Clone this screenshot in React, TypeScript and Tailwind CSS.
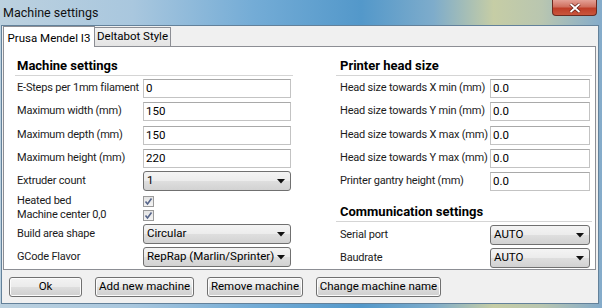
import React from "react";

const font = { fontFamily: 'Roboto, "Liberation Sans", sans-serif' };

function Arrow() {
  return (
    <svg width="8" height="5" viewBox="0 0 8 5" className="shrink-0">
      <path d="M0 0 L8 0 L4 4.5 Z" fill="#111" />
    </svg>
  );
}

function Input({ value }: { value: string }) {
  return (
    <div className="h-[19px] flex-1 border border-[#c3c3c3] border-t-[#a9a9a9] bg-white pl-[2px] flex items-center text-[11.5px] text-black whitespace-nowrap">
      {value}
    </div>
  );
}

function Select({ value, h = 20 }: { value: string; h?: number }) {
  return (
    <div
      className="flex-1 rounded-[3px] border border-[#707070] bg-[linear-gradient(180deg,#f4f4f4_0%,#ececec_48%,#dedede_52%,#d2d2d2_100%)] flex items-center justify-between pl-[3px] pr-[5px] text-[11.5px] text-black whitespace-nowrap"
      style={{ height: h }}
    >
      <span>{value}</span>
      <Arrow />
    </div>
  );
}

function Check() {
  return (
    <div className="w-[11px] h-[11px] border border-[#9a9a9a] bg-[linear-gradient(180deg,#e4e4e4,#f4f4f4)] flex items-center justify-center">
      <svg width="9" height="9" viewBox="0 0 9 9">
        <path d="M1.5 4.5 L3.5 7 L7.5 1.5" stroke="#56658a" strokeWidth="1.6" fill="none" />
      </svg>
    </div>
  );
}

function Row({
  label,
  children,
  labelW,
  className = "",
  h = 19,
}: {
  label: string;
  children: React.ReactNode;
  labelW: number;
  className?: string;
  h?: number;
}) {
  return (
    <div className={"flex items-center " + className} style={{ height: h }}>
      <div className="shrink-0 text-[11px] tracking-[-0.2px] text-[#1b1b1b] whitespace-nowrap" style={{ width: labelW }}>
        {label}
      </div>
      {children}
    </div>
  );
}

function Heading({ text, className = "" }: { text: string; className?: string }) {
  return (
    <div className={"h-[19px] border-b border-[#d5d5d5] flex items-center text-[13px] font-bold text-black whitespace-nowrap " + className}>
      <span className="pl-[2px]">{text}</span>
    </div>
  );
}

function Button({ text, w }: { text: string; w: number }) {
  return (
    <div
      className="h-[20px] rounded-[3px] border border-[#707070] bg-[linear-gradient(180deg,#f3f3f3_0%,#ebebeb_48%,#dddddd_52%,#cfcfcf_100%)] flex items-center justify-center text-[11.5px] text-black whitespace-nowrap shadow-[inset_0_0_0_1px_#fcfcfc]"
      style={{ width: w }}
    >
      {text}
    </div>
  );
}

export default function App() {
  return (
    <div
      className="w-[602px] h-[308px] flex flex-col bg-[linear-gradient(90deg,#bcd1df_0%,#a9c7de_22%,#74acd6_42%,#5398ca_60%,#7eaccb_72%,#c6cda5_82%,#b9c6b0_90%,#84abca_100%)] overflow-hidden"
      style={font}
    >
      {/* title bar */}
      <div className="h-[25px] flex items-start justify-between shrink-0">
        <div className="pl-[3px] pt-[4px] text-[12.5px] text-[#111] whitespace-nowrap">Machine settings</div>
        <div className="mr-[5px] w-[45px] h-[16px] rounded-b-[4px] border border-t-0 border-[#6b2a20] bg-[linear-gradient(180deg,#e4a196_0%,#d0705f_45%,#bf3e28_55%,#c9563d_100%)] flex items-center justify-center">
          <svg width="12" height="10" viewBox="0 0 12 10">
            <path d="M1.5 1 L10.5 9 M10.5 1 L1.5 9" stroke="#5a1a12" strokeWidth="3.2" />
            <path d="M1.5 1 L10.5 9 M10.5 1 L1.5 9" stroke="#fff" strokeWidth="1.8" />
          </svg>
        </div>
      </div>

      {/* content */}
      <div className="ml-[1px] w-[598px] h-[279px] border border-[#63819a] bg-[#f0f0f0] flex flex-col">
        {/* tabs */}
        <div className="h-[21px] flex items-end pl-[1px] relative z-10">
          <div className="h-[21px] w-[92px] border border-b-0 border-[#8c8e94] bg-white flex items-start justify-center pt-[3px] text-[11.5px] text-black whitespace-nowrap">
            Prusa Mendel I3
          </div>
          <div className="h-[19px] w-[76px] border border-b-0 border-l-0 border-[#8c8e94] bg-[linear-gradient(180deg,#f2f2f2,#e4e4e4)] flex items-center justify-center text-[11.5px] text-black mb-[1px] whitespace-nowrap">
            Deltabot Style
          </div>
        </div>
        {/* panel */}
        <div className="ml-[1px] -mt-[1px] w-[593px] h-[224px] border border-[#8c8e94] bg-white flex pl-[11px] pt-[10px]">
          {/* left */}
          <div className="w-[278px] flex flex-col">
            <Heading text="Machine settings" />
            <div className="flex flex-col pl-[2px] pr-[2px]">
              <Row label="E-Steps per 1mm filament" labelW={126} className="mt-[3px]">
                <Input value="0" />
              </Row>
              <Row label="Maximum width (mm)" labelW={126} className="mt-[4px]">
                <Input value="150" />
              </Row>
              <Row label="Maximum depth (mm)" labelW={126} className="mt-[5px]">
                <Input value="150" />
              </Row>
              <Row label="Maximum height (mm)" labelW={126} className="mt-[4px]">
                <Input value="220" />
              </Row>
              <Row label="Extruder count" labelW={126} className="mt-[3px]" h={20}>
                <Select value="1" />
              </Row>
              <Row label="Heated bed" labelW={126} className="mt-[3px]" h={14}>
                <Check />
              </Row>
              <Row label="Machine center 0,0" labelW={126} h={14}>
                <Check />
              </Row>
              <Row label="Build area shape" labelW={126} className="mt-[2px]" h={20}>
                <Select value="Circular" />
              </Row>
              <Row label="GCode Flavor" labelW={126} className="mt-[3px]" h={20}>
                <Select value="RepRap (Marlin/Sprinter)" />
              </Row>
            </div>
          </div>
          {/* right */}
          <div className="ml-[43px] w-[256px] flex flex-col">
            <Heading text="Printer head size" className="pl-[2px]" />
            <div className="flex flex-col pl-[4px] pr-[2px]">
              <Row label="Head size towards X min (mm)" labelW={150} className="mt-[3px]">
                <Input value="0.0" />
              </Row>
              <Row label="Head size towards Y min (mm)" labelW={150} className="mt-[4px]">
                <Input value="0.0" />
              </Row>
              <Row label="Head size towards X max (mm)" labelW={150} className="mt-[5px]">
                <Input value="0.0" />
              </Row>
              <Row label="Head size towards Y max (mm)" labelW={150} className="mt-[4px]">
                <Input value="0.0" />
              </Row>
              <Row label="Printer gantry height (mm)" labelW={150} className="mt-[4px]">
                <Input value="0.0" />
              </Row>
            </div>
            <Heading text="Communication settings" className="mt-[12px] pl-[2px]" />
            <div className="flex flex-col pl-[4px] pr-[2px]">
              <Row label="Serial port" labelW={150} className="mt-[3px]" h={20}>
                <Select value="AUTO" />
              </Row>
              <Row label="Baudrate" labelW={150} className="mt-[3px]" h={20}>
                <Select value="AUTO" />
              </Row>
            </div>
          </div>
        </div>
        {/* buttons */}
        <div className="flex items-center gap-[13px] pl-[7px] mt-[7px]">
          <Button text="Ok" w={73} />
          <Button text="Add new machine" w={99} />
          <Button text="Remove machine" w={96} />
          <Button text="Change machine name" w={125} />
        </div>
      </div>
    </div>
  );
}
